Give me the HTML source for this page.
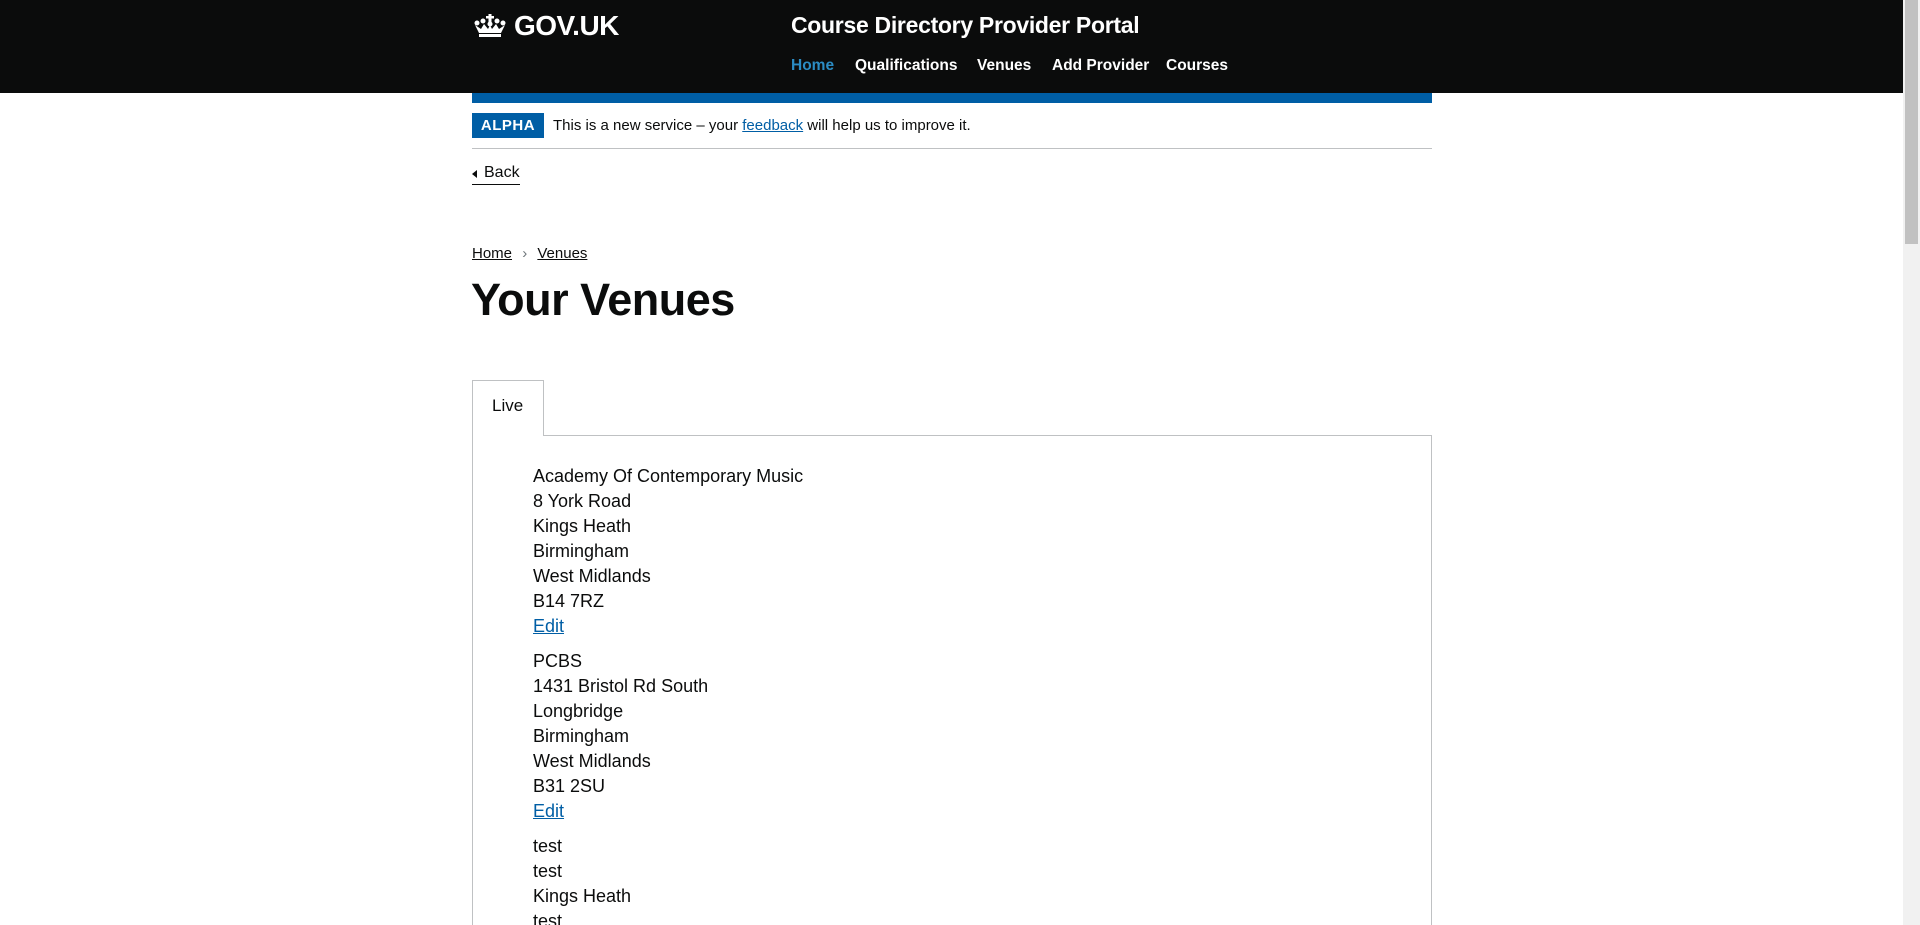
<!DOCTYPE html>
<html><head><meta charset="utf-8"><style>
*{margin:0;padding:0;box-sizing:border-box}
html,body{width:1920px;height:925px;overflow:hidden;background:#fff;font-family:"Liberation Sans",Arial,sans-serif;color:#0b0c0c}
#wrap{position:relative;width:1920px;height:925px;overflow:hidden}
.hdr{position:absolute;left:0;top:0;width:1903px;height:93px;background:#0b0c0c;color:#fff}
.logo{position:absolute;left:472px;top:10px;display:flex;align-items:center}
.logo span{font-weight:bold;font-size:28px;margin-left:6px;letter-spacing:-0.5px}
.title{position:absolute;left:791px;top:12px;font-size:23px;font-weight:bold;letter-spacing:-0.3px}
.nav{position:absolute;top:57px;font-size:15.5px;font-weight:bold}
.bar{position:absolute;left:472px;top:93px;width:960px;height:10px;background:#005ea5}
.alpha{position:absolute;left:472px;top:113px;width:72px;height:25px;background:#005ea5;color:#fff;font-weight:bold;font-size:15px;text-align:center;line-height:25px;letter-spacing:0.5px}
.phase{position:absolute;left:553px;top:117px;font-size:15px}
.phase a{color:#005ea5}
.rule{position:absolute;left:472px;top:148px;width:960px;height:1px;background:#bfc1c3}
.back{position:absolute;left:472px;top:164px;font-size:16px;border-bottom:1px solid #0b0c0c;padding-left:12px;height:21px}
.back:before{content:"";position:absolute;left:0;top:6px;border-style:solid;border-width:4px 5px 4px 0;border-color:transparent #0b0c0c transparent transparent}
.bc{position:absolute;left:472px;top:245px;font-size:15px}
.bc u{color:#0b0c0c}
h1{position:absolute;left:471px;top:274px;font-size:45px;font-weight:bold;letter-spacing:-0.5px}
.tab{position:absolute;left:472px;top:380px;width:72px;height:56px;border:1px solid #bfc1c3;border-bottom:none;background:#fff;font-size:17px;padding:15px 0 0 19px;z-index:2}
.panel{position:absolute;left:472px;top:435px;width:960px;height:490px;border:1px solid #bfc1c3;border-bottom:none;overflow:hidden}
.list{position:absolute;left:60px;top:28px;font-size:18px;line-height:25px}
.list div.g{margin-bottom:10px}
.list a{color:#005ea5;text-decoration:underline}
.sb{position:absolute;right:0;top:0;width:17px;height:925px;background:#f1f1f1}
.sb div{position:absolute;left:2px;top:0;width:13px;height:244px;background:#c1c1c1}
</style></head><body><div id="wrap">
<div class="hdr">
 <div class="logo"><svg width="36" height="24" viewBox="0 0 36 24"><g fill="#fff"><rect x="16.5" y="0" width="3" height="9"/><rect x="14" y="2" width="8" height="2.5"/><circle cx="5" cy="9" r="2.5"/><circle cx="31" cy="9" r="2.5"/><circle cx="11" cy="7" r="2.5"/><circle cx="25" cy="7" r="2.5"/><circle cx="18" cy="10" r="2.5"/><path d="M3 11 L7 19 L29 19 L33 11 L27 15 L24 10 L20 15 L18 11 L16 15 L12 10 L9 15 Z"/><rect x="7" y="20" width="22" height="3"/></g></svg><span>GOV.UK</span></div>
 <div class="title">Course Directory Provider Portal</div>
 <div class="nav" style="left:791px;color:#2b8cc4">Home</div>
 <div class="nav" style="left:855px">Qualifications</div>
 <div class="nav" style="left:977px">Venues</div>
 <div class="nav" style="left:1052px">Add Provider</div>
 <div class="nav" style="left:1166px">Courses</div>
</div>
<div class="bar"></div>
<div class="alpha">ALPHA</div>
<div class="phase">This is a new service – your <a href="#">feedback</a> will help us to improve it.</div>
<div class="rule"></div>
<div class="back">Back</div>
<div class="bc"><u>Home</u> <span style="color:#6f777b;margin:0 6px">›</span> <u>Venues</u></div>
<h1>Your Venues</h1>
<div class="tab">Live</div>
<div class="panel">
<div class="list">
<div class="g">Academy Of Contemporary Music<br>8 York Road<br>Kings Heath<br>Birmingham<br>West Midlands<br>B14 7RZ<br><a href="#">Edit</a></div>
<div class="g">PCBS<br>1431 Bristol Rd South<br>Longbridge<br>Birmingham<br>West Midlands<br>B31 2SU<br><a href="#">Edit</a></div>
<div class="g">test<br>test<br>Kings Heath<br>test<br>test</div>
</div>
</div>
<div class="sb"><div></div></div>
</div></body></html>
